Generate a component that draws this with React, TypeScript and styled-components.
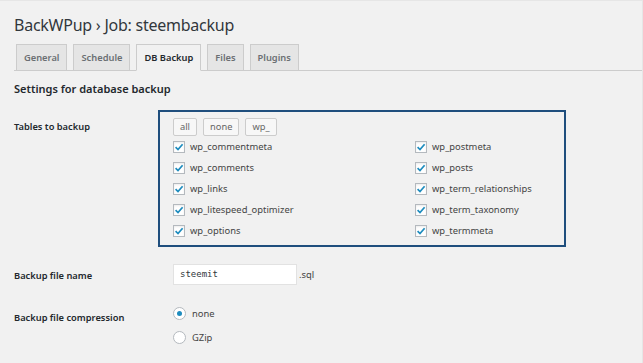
import React from 'react'
import styled, { createGlobalStyle } from 'styled-components'

const GlobalStyle = createGlobalStyle`
  html, body {
    margin: 0;
    padding: 0;
    background: #f1f1f1;
  }
  body {
    font-family: 'Noto Sans', 'Open Sans', sans-serif;
    color: #23282d;
  }
`

const Page = styled.div`
  width: 643px;
  height: 363px;
  box-sizing: border-box;
  padding: 11px 0 0 14px;
  overflow: hidden;
  border-top: 1px solid #e6e6e6;
  border-right: 1px solid #e6e6e6;
`

const Title = styled.h1`
  margin: 0;
  font-size: 16px;
  font-weight: 400;
  letter-spacing: -0.25px;
  line-height: 26px;
  color: #32373c;
`

const TabBar = styled.nav`
  display: flex;
  gap: 6px;
  margin-top: 6px;
  padding-left: 2px;
  border-bottom: 1px solid #ccc;
`

const Tab = styled.span<{ $active?: boolean }>`
  display: block;
  margin-bottom: -1px;
  padding: 0 7px;
  height: 25px;
  line-height: 25px;
  font-size: 9.3px;
  font-weight: 600;
  border: 1px solid #ccc;
  border-bottom-color: ${(p) => (p.$active ? '#f1f1f1' : '#ccc')};
  background: ${(p) => (p.$active ? '#f1f1f1' : '#e5e5e5')};
  color: ${(p) => (p.$active ? '#23282d' : '#6b6f73')};
`

const SectionTitle = styled.h3`
  margin: 9px 0 0;
  font-size: 11px;
  font-weight: 600;
  line-height: 18px;
  color: #23282d;
`

const FormGrid = styled.div`
  display: grid;
  grid-template-columns: 144px 1fr;
  align-items: start;
  margin-top: 12px;
`

const Label = styled.div<{ $top: number }>`
  padding-top: ${(p) => p.$top}px;
  font-size: 9.3px;
  font-weight: 600;
  line-height: 14px;
  color: #23282d;
`

const Field = styled.div<{ $top: number; $left?: number }>`
  padding: ${(p) => p.$top}px 0 0 ${(p) => p.$left ?? 15}px;
  font-size: 9.4px;
  color: #444;
`

const Highlight = styled.div`
  width: 408px;
  box-sizing: border-box;
  height: 137px;
  border: 2px solid #1f4e7d;
  padding: 6px 13px 0;
`

const ButtonRow = styled.div`
  display: flex;
  gap: 6px;
`

const SmallButton = styled.span`
  display: block;
  height: 18px;
  box-sizing: border-box;
  padding: 0 6px;
  line-height: 16px;
  font-size: 9.3px;
  color: #666;
  background: #f7f7f7;
  border: 1px solid #ccc;
  border-radius: 2px;
`

const TableColumns = styled.div`
  display: grid;
  grid-template-columns: 242px 1fr;
`

const TableColumn = styled.div`
  display: flex;
  flex-direction: column;
`

const CheckRow = styled.label`
  display: flex;
  align-items: center;
  gap: 5px;
  height: 21px;
  font-size: 9.4px;
  color: #444;
`

const Box = styled.span`
  display: inline-flex;
  align-items: center;
  justify-content: center;
  width: 12px;
  height: 12px;
  box-sizing: border-box;
  border: 1px solid #b4b9be;
  background: #fff;
  box-shadow: inset 0 1px 2px rgba(0, 0, 0, 0.08);
`

const TextInput = styled.span`
  display: inline-block;
  width: 124px;
  height: 21px;
  box-sizing: border-box;
  padding: 0 6px;
  line-height: 19px;
  background: #fff;
  border: 1px solid #e2e2e2;
  font-family: 'DejaVu Sans Mono', 'Liberation Mono', monospace;
  font-size: 9px;
  color: #32373c;
  vertical-align: middle;
`

const Suffix = styled.span`
  margin-left: 2px;
  vertical-align: middle;
`

const RadioRow = styled.label`
  display: flex;
  align-items: center;
  gap: 6px;
  height: 24px;
  font-size: 9.4px;
  color: #444;
`

const Radio = styled.span<{ $checked?: boolean }>`
  display: inline-flex;
  align-items: center;
  justify-content: center;
  width: 13px;
  height: 13px;
  box-sizing: border-box;
  border-radius: 50%;
  border: 1px solid #b4b9be;
  background: #fff;

  &::after {
    content: '';
    display: ${(p) => (p.$checked ? 'block' : 'none')};
    width: 5px;
    height: 5px;
    border-radius: 50%;
    background: #1e8cbe;
  }
`

const Check = () => (
  <svg width="10" height="10" viewBox="0 0 10 10">
    <path d="M1.6 5.2 L4 7.6 L8.6 2.2" fill="none" stroke="#1e8cbe" strokeWidth="1.7" />
  </svg>
)

const leftTables = [
  'wp_commentmeta',
  'wp_comments',
  'wp_links',
  'wp_litespeed_optimizer',
  'wp_options'
]

const rightTables = [
  'wp_postmeta',
  'wp_posts',
  'wp_term_relationships',
  'wp_term_taxonomy',
  'wp_termmeta'
]

const tabs = ['General', 'Schedule', 'DB Backup', 'Files', 'Plugins']

const TableList = ({ names }: { names: string[] }): JSX.Element => (
  <TableColumn>
    {names.map((t) => (
      <CheckRow key={t}>
        <Box>
          <Check />
        </Box>
        {t}
      </CheckRow>
    ))}
  </TableColumn>
)

const App = (): JSX.Element => {
  return (
    <>
      <GlobalStyle />
      <Page>
        <Title>BackWPup › Job: steembackup</Title>
        <TabBar>
          {tabs.map((t) => (
            <Tab key={t} $active={t === 'DB Backup'}>
              {t}
            </Tab>
          ))}
        </TabBar>
        <SectionTitle>Settings for database backup</SectionTitle>
        <FormGrid>
          <Label $top={10}>Tables to backup</Label>
          <Field $top={0} $left={0}>
            <Highlight>
              <ButtonRow>
                <SmallButton>all</SmallButton>
                <SmallButton>none</SmallButton>
                <SmallButton>wp_</SmallButton>
              </ButtonRow>
              <TableColumns>
                <TableList names={leftTables} />
                <TableList names={rightTables} />
              </TableColumns>
            </Highlight>
          </Field>

          <Label $top={22}>Backup file name</Label>
          <Field $top={17}>
            <TextInput>steemit</TextInput>
            <Suffix>.sql</Suffix>
          </Field>

          <Label $top={26}>Backup file compression</Label>
          <Field $top={16}>
            <RadioRow>
              <Radio $checked />
              none
            </RadioRow>
            <RadioRow>
              <Radio />
              GZip
            </RadioRow>
          </Field>
        </FormGrid>
      </Page>
    </>
  )
}

export default App
